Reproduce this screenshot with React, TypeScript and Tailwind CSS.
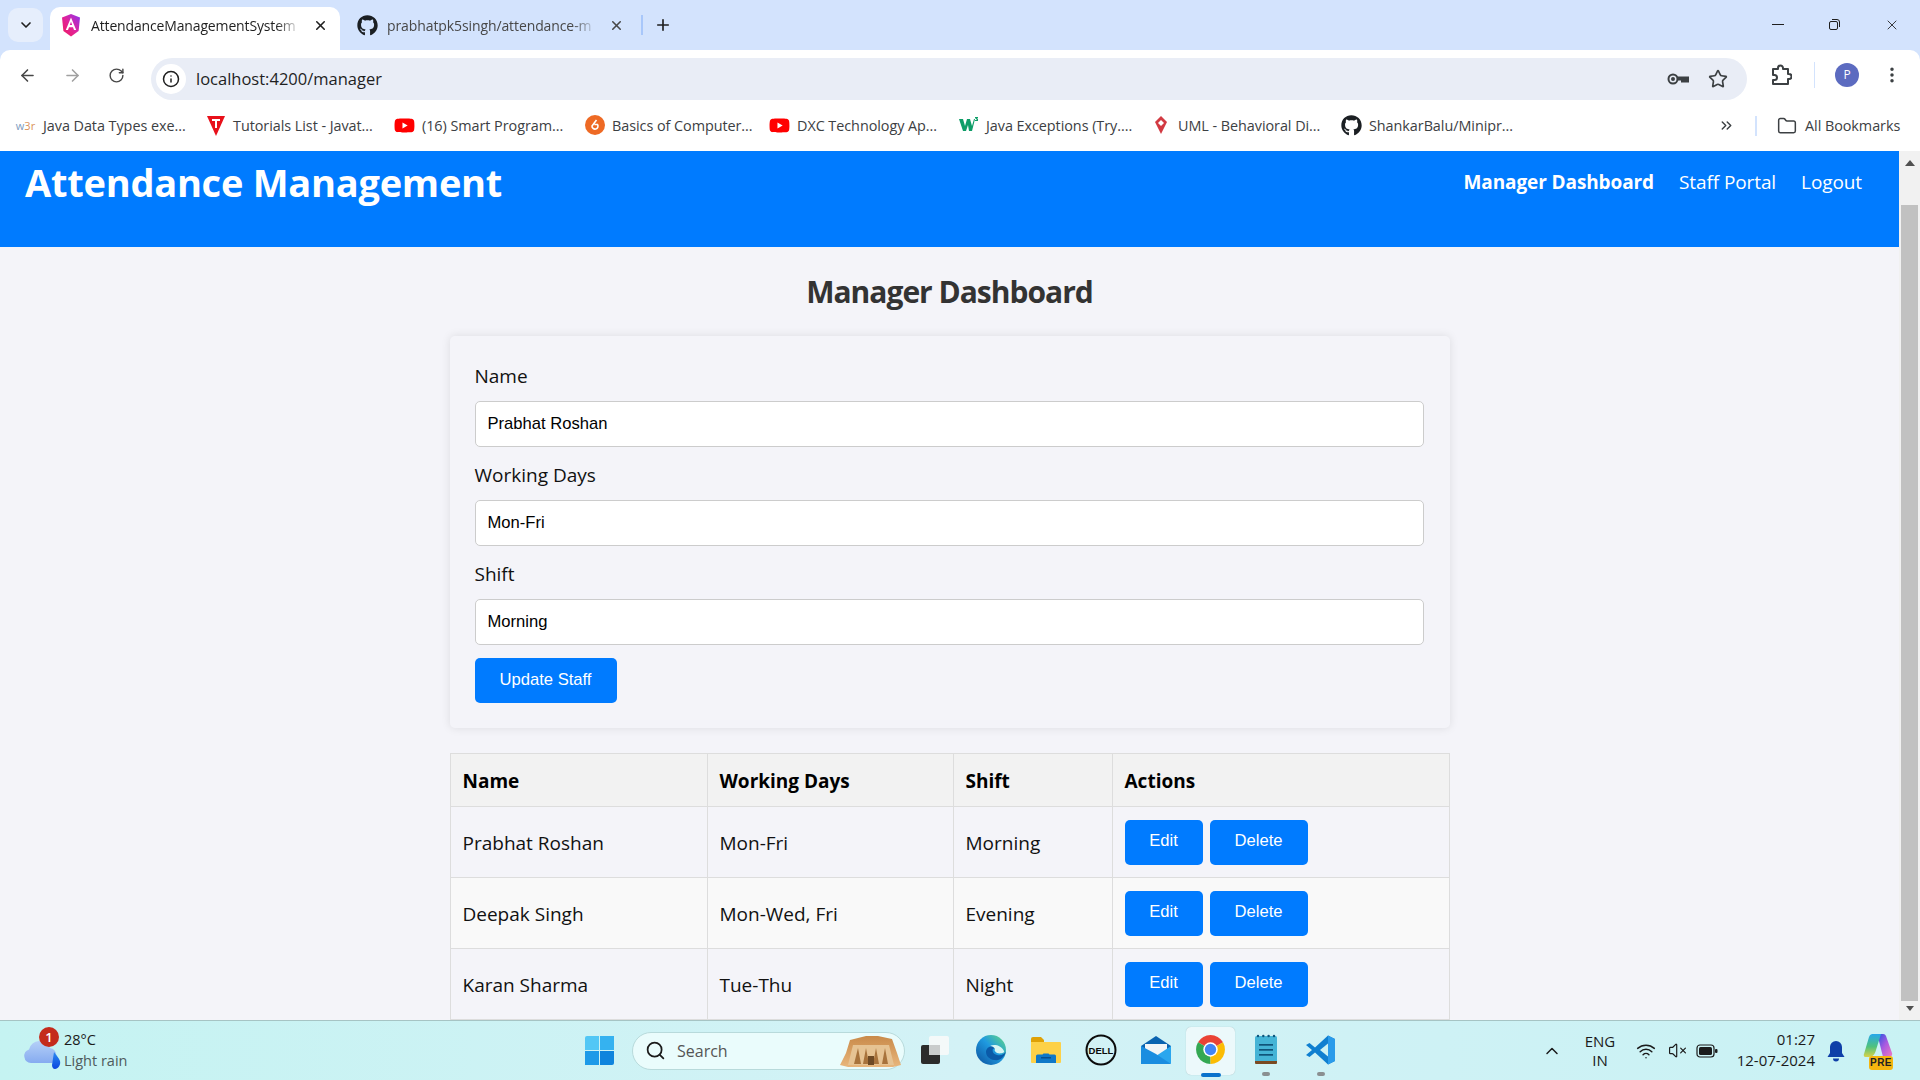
import { ReactNode } from "react"
import {
    ArrowLeft,
    ArrowRight,
    ChevronDown,
    ChevronsRight,
    ChevronUp,
    EllipsisVertical,
    Folder,
    Info,
    Plus,
    RotateCw,
    Search,
    Star,
    VolumeX,
    Wifi,
    X,
} from "lucide-react"
import { FaGithub, FaYoutube } from "react-icons/fa"

/* ---------------- Data ---------------- */
const staff = [
    { name: "Prabhat Roshan", days: "Mon-Fri", shift: "Morning" },
    { name: "Deepak Singh", days: "Mon-Wed, Fri", shift: "Evening" },
    { name: "Karan Sharma", days: "Tue-Thu", shift: "Night" },
]

const fields = [
    { label: "Name", value: "Prabhat Roshan" },
    { label: "Working Days", value: "Mon-Fri" },
    { label: "Shift", value: "Morning" },
]

const YouTube = () => <FaYoutube size={21} className="text-[#f00]" />

const bookmarks: { width: string; text: string; icon: ReactNode }[] = [
    {
        width: "w-[190px]",
        text: "Java Data Types exe...",
        icon: <span className="text-[11px] leading-none text-[#7d9cc0]">w<span className="text-[#d9925a]">3r</span></span>,
    },
    {
        width: "w-[189px]",
        text: "Tutorials List - Javat...",
        icon: (
            <svg width="20" height="22" viewBox="0 0 20 22">
                <path d="M1 1h18L10 21z" fill="#e8101a" />
                <path d="M6 4h8v2h-3v7H9V6H6z" fill="#fff" />
            </svg>
        ),
    },
    { width: "w-[190px]", text: "(16) Smart Program...", icon: <YouTube /> },
    {
        width: "w-[185px]",
        text: "Basics of Computer...",
        icon: (
            <svg width="20" height="20" viewBox="0 0 20 20">
                <circle cx="10" cy="10" r="10" fill="#ee6a24" />
                <path d="M11.5 5 7 11a3 3 0 1 0 5.5-1.5H9.5" fill="none" stroke="#fff" strokeWidth="1.6" />
            </svg>
        ),
    },
    { width: "w-[189px]", text: "DXC Technology Ap...", icon: <YouTube /> },
    {
        width: "w-[192px]",
        text: "Java Exceptions (Try....",
        icon: (
            <svg width="20" height="18" viewBox="0 0 20 18">
                <path d="M0 3h4l2 7 2-7h3l2 7 2-7h1l-3 12h-3L9 9l-2 6H4z" fill="#0f9d68" />
                <path d="M16 1h3v1l-1 1h1v2h-3V4h2l-2-2z" fill="#0f9d68" />
            </svg>
        ),
    },
    {
        width: "w-[191px]",
        text: "UML - Behavioral Di...",
        icon: (
            <svg width="18" height="20" viewBox="0 0 18 20">
                <path d="M9 1 15 7 12 13 9 19 6 13 3 7z" fill="#d23a42" />
                <path d="M9 5 12 8 9 11 6 8z" fill="#fff" />
            </svg>
        ),
    },
    {
        width: "w-[200px]",
        text: "ShankarBalu/Minipr...",
        icon: <FaGithub size={21} className="text-[#1b1f23]" />,
    },
]

/* ---------------- Drawn icons ---------------- */
const AngularLogo = () => (
    <svg width="20" height="23" viewBox="0 0 20 23">
        <defs>
            <linearGradient id="ng" x1="0" y1="1" x2="1" y2="0">
                <stop offset="0" stopColor="#f01a5c" />
                <stop offset="0.5" stopColor="#e0249c" />
                <stop offset="1" stopColor="#8a34f0" />
            </linearGradient>
        </defs>
        <path d="M10 0 1 3.5 2.4 17 10 22.500 17.600 17 19 3.500z" fill="url(#ng)" />
        <path d="M10 3.500 4.800 16h2.200l1-2.800h4l1 2.800h2.200zM8.800 11 10 7.800 11.200 11z" fill="#fff" fillRule="evenodd" />
    </svg>
)

const KeyIcon = () => (
    <svg width="24" height="24" viewBox="0 0 24 24" fill="none" stroke="#3c4043" strokeWidth="2">
        <circle cx="7" cy="12" r="4.5" />
        <circle cx="7" cy="12" r="1" fill="#3c4043" />
        <path d="M11.5 10.5H22v4h-2v-2h-2v2h-2v-2h-4.5" />
    </svg>
)

const RestoreIcon = () => (
    <svg width="14" height="14" viewBox="0 0 14 14" fill="none" stroke="#1f1f1f">
        <rect x="2.5" y="3.5" width="8" height="8" rx="1.5" />
        <path d="M5 1.5h5a2.5 2.5 0 0 1 2.5 2.5v5" />
    </svg>
)

const ExtensionIcon = () => (
    <svg width="22" height="22" viewBox="0 0 22 22" fill="none" stroke="#3c4043" strokeWidth="2" strokeLinejoin="round">
        <path d="M3 5h5V4a2.500 2.500 0 0 1 5 0v1h5v5h1a2.500 2.500 0 0 1 0 5h-1v5H3v-4h1.500a2.500 2.500 0 0 0 0-5H3z" />
    </svg>
)

const WeatherIcon = () => (
    <div className="relative w-[46px] h-[46px]">
        <svg width="46" height="46" viewBox="0 0 46 46" className="absolute left-0 top-0">
            <defs>
                <linearGradient id="cloud" x1="0" y1="0" x2="0" y2="1">
                    <stop offset="0" stopColor="#b5d0f7" />
                    <stop offset="1" stopColor="#86abf0" />
                </linearGradient>
                <linearGradient id="drop" x1="0" y1="0" x2="0" y2="1">
                    <stop offset="0" stopColor="#2b8cf0" />
                    <stop offset="1" stopColor="#0b45e0" />
                </linearGradient>
            </defs>
            <path d="M11 35a7 7 0 0 1-2-13.6A11 11 0 0 1 30 20a8 8 0 0 1 2 15z" fill="url(#cloud)" />
            <path d="M34 24c2 3 5 6 6 9 1 4-2 8-5 8-2 0-3-2-3-4z" fill="url(#drop)" />
        </svg>
        <span className="absolute left-[19px] top-[-1px] w-[20px] h-[20px] rounded-full bg-[#c42b1c] text-white text-[13px] leading-[20px] text-center font-semibold">
            1
        </span>
    </div>
)

const WindowsLogo = () => (
    <div className="grid grid-cols-2 gap-[1px] w-[29px] h-[29px]">
        <div className="bg-[#52c7f5] rounded-tl-[2px]" />
        <div className="bg-[#35b2f0]" />
        <div className="bg-[#1d9ae8]" />
        <div className="bg-[#0f84dd] rounded-br-[2px]" />
    </div>
)

const TempleIcon = () => (
    <svg width="62" height="32" viewBox="0 0 62 32">
        <defs>
            <linearGradient id="sand" x1="0" y1="0" x2="0" y2="1">
                <stop offset="0" stopColor="#c98a4a" />
                <stop offset="1" stopColor="#e8b67c" />
            </linearGradient>
        </defs>
        <path d="M10 5 26 1h12l14 3 5 14 4 12-8 2H8l-8-2 6-12z" fill="url(#sand)" />
        <path d="M13 10h36l5 20H8z" fill="#e6c393" />
        <path d="M14 29 18 13l3 16zM23 29l3-16 3 16zM33 29l3-16 3 16zM42 29l3-16 3 16z" fill="#a8733c" />
        <rect x="28" y="21" width="6" height="9" fill="#6e4a25" />
    </svg>
)

const TaskView = () => (
    <svg width="30" height="30" viewBox="0 0 30 30">
        <rect x="1" y="10" width="19" height="19" rx="2" fill="#2b2b2b" />
        <rect x="9" y="1" width="20" height="19" rx="2" fill="#f7f9f9" fillOpacity="0.9" />
        <rect x="9" y="10" width="11" height="10" fill="#c9cccc" />
    </svg>
)

const EdgeIcon = () => (
    <svg width="32" height="32" viewBox="0 0 32 32">
        <defs>
            <linearGradient id="edge" x1="0" y1="1" x2="1" y2="0">
                <stop offset="0" stopColor="#0c4f9c" />
                <stop offset="0.55" stopColor="#1f9ae0" />
                <stop offset="1" stopColor="#66dc7e" />
            </linearGradient>
        </defs>
        <circle cx="16" cy="16" r="15" fill="url(#edge)" />
        <path d="M31 17c-1 3-5 5-9 4-4-1-5-4-4-6 1-1 3-1 4 0-3-5-11-3-11 3 0 6 7 9 12 8 4-1 7-4 8-9z" fill="#0b5aa8" />
        <path d="M15 12c4-2 11-1 14 5 1 2-4 3-7 2-2-1-3-3-2-4-1-2-3-3-5-3z" fill="#d8f5f3" />
    </svg>
)

const FilesIcon = () => (
    <svg width="32" height="28" viewBox="0 0 32 28">
        <path d="M1 3a2 2 0 0 1 2-2h8l3 3v5H1z" fill="#dfa106" />
        <path d="M1 6h29a1 1 0 0 1 1 1v19a1 1 0 0 1-1 1H2a1 1 0 0 1-1-1z" fill="#fdd148" />
        <path d="M6 20a1.500 1.500 0 0 1 1.500-1.500h5l1-1h5l1 1h5A1.500 1.500 0 0 1 26 20v7H6z" fill="#0f78c8" />
        <rect x="11" y="21" width="10" height="1.500" fill="#0a4f8c" />
    </svg>
)

const DellIcon = () => (
    <svg width="32" height="32" viewBox="0 0 32 32">
        <circle cx="16" cy="16" r="14.500" fill="none" stroke="#0b0b0b" strokeWidth="2" />
        <text x="16" y="19.500" textAnchor="middle" fontSize="9.500" fontWeight="700" fontFamily="Liberation Sans, sans-serif" fill="#0b0b0b">
            DELL
        </text>
    </svg>
)

const MailIcon = () => (
    <svg width="32" height="30" viewBox="0 0 32 30">
        <path d="M1 11 16 1l15 10v3H1z" fill="#0a63b0" />
        <path d="M5 9h22v9l-11 6-11-6z" fill="#f2f5f7" />
        <path d="M1 11v17a1 1 0 0 0 1 1h28a1 1 0 0 0 1-1V11L16 21z" fill="#2aa6ee" />
        <path d="M1 29h30L16 19 1 11z" fill="#1a8de0" />
    </svg>
)

const ChromeIcon = () => (
    <svg width="31" height="31" viewBox="0 0 30 30">
        <path d="M15 15 27.100 8A14 14 0 0 0 2.900 8z" fill="#ea4335" />
        <path d="M15 15 2.900 8A14 14 0 0 0 15 29z" fill="#34a853" />
        <path d="M15 15 15 29A14 14 0 0 0 27.100 8z" fill="#fbbc04" />
        <circle cx="15" cy="15" r="7" fill="#fff" />
        <circle cx="15" cy="15" r="5.500" fill="#4285f4" />
    </svg>
)

const NotepadIcon = () => (
    <svg width="24" height="32" viewBox="0 0 24 32">
        <rect x="1" y="2" width="22" height="26" rx="1.500" fill="#45b4d6" />
        <path d="M1 27h22v2a1 1 0 0 1-1 1H2a1 1 0 0 1-1-1z" fill="#7a4a22" />
        <rect x="5" y="10" width="14" height="1.700" fill="#10547a" />
        <rect x="5" y="15" width="14" height="1.700" fill="#10547a" />
        <rect x="5" y="20" width="14" height="1.700" fill="#10547a" />
        <g fill="#10547a">
            <circle cx="4" cy="2" r="1.200" />
            <circle cx="9.300" cy="2" r="1.200" />
            <circle cx="14.600" cy="2" r="1.200" />
            <circle cx="20" cy="2" r="1.200" />
        </g>
    </svg>
)

const VsCodeIcon = () => (
    <svg width="32" height="32" viewBox="0 0 32 32">
        <path d="M23 1.500 30 5v22l-7 3.500L10 18.500 4.500 23 1 21l6-5-6-5 3.500-2L10 13.500z" fill="#0f7fd0" />
        <path d="M23 1.500 30 5v22l-7 3.500z" fill="#2a9bea" />
        <path d="M23 9.500 15 16l8 6.500z" fill="#cdf2f4" />
    </svg>
)

const BatteryIcon = () => (
    <svg width="22" height="16" viewBox="0 0 22 16" fill="none">
        <rect x="1" y="2" width="17" height="12" rx="3" stroke="#1b1b1b" strokeWidth="1.200" />
        <rect x="3" y="4" width="13" height="8" rx="1.500" fill="#1b1b1b" />
        <rect x="19" y="6" width="2.500" height="4" rx="1" fill="#1b1b1b" />
    </svg>
)

const BellIcon = () => (
    <svg width="18" height="22" viewBox="0 0 18 22">
        <path d="M9 1a6 6 0 0 0-6 6v6l-2.500 4h17L15 13V7a6 6 0 0 0-6-6z" fill="#0f3fa8" />
        <path d="M6 18.500h6a3 3 0 0 1-6 0z" fill="#0f3fa8" />
    </svg>
)

const CopilotIcon = () => (
    <div className="relative w-[32px] h-[36px]">
        <svg width="30" height="28" viewBox="0 0 30 28" className="absolute left-[-1px] top-0">
            <defs>
                <linearGradient id="cpa" x1="0" y1="0" x2="0" y2="1">
                    <stop offset="0" stopColor="#26a8ec" />
                    <stop offset="0.55" stopColor="#4fc27c" />
                    <stop offset="1" stopColor="#d9d24a" />
                </linearGradient>
                <linearGradient id="cpb" x1="0" y1="0" x2="1" y2="1">
                    <stop offset="0" stopColor="#1f55e0" />
                    <stop offset="0.5" stopColor="#a95ae0" />
                    <stop offset="1" stopColor="#f07ac0" />
                </linearGradient>
            </defs>
            <path d="M14 1h6a3 3 0 0 1 3 2l6 17a3 3 0 0 1-3 4h-6L16 8z" fill="url(#cpb)" />
            <path d="M9 1h9L13 17c-1 4-3 7-7 7H3a2 2 0 0 1-2-3l5-17a4 4 0 0 1 3-3z" fill="url(#cpa)" />
        </svg>
        <span className="absolute left-[5px] bottom-[-1px] h-[14px] w-[24px] rounded-[3px] bg-[#f5b50f] text-[10px] leading-[14px] text-center font-bold text-[#222] tracking-[0.5px] font-['Liberation_Sans',sans-serif]">
            PRE
        </span>
    </div>
)

/* ---------------- Browser chrome ---------------- */
function BrowserChrome() {
    return (
        <div className="bg-[#d3e3fd] font-['Open_Sans',sans-serif] shrink-0">
            {/* Tabs */}
            <div className="h-[50px] flex">
                <div className="ml-[8px] mt-[8px] w-[35px] h-[34px] rounded-[10px] bg-[#e6eefc] flex items-center justify-center">
                    <ChevronDown size={16} strokeWidth={2.5} className="text-[#1f1f1f]" />
                </div>
                <div className="ml-[7px] mt-[7px] w-[290px] h-[43px] bg-white rounded-t-[10px] flex items-center pl-[11px] pb-[7px]">
                    <AngularLogo />
                    <span className="ml-[10px] w-[210px] whitespace-nowrap text-[14px] text-[#1f1f1f] tracking-[-0.15px] [mask-image:linear-gradient(to_right,black_88%,transparent)]">
                        AttendanceManagementSystem
                    </span>
                    <X size={15} strokeWidth={2.5} className="ml-[12px] text-[#1f1f1f]" />
                </div>
                <div className="w-[290px] h-[43px] mt-[7px] flex items-center pl-[17px] pb-[7px]">
                    <FaGithub size={21} className="text-[#1b1f23]" />
                    <span className="ml-[9px] w-[210px] whitespace-nowrap text-[14px] text-[#474747] tracking-[-0.1px] [mask-image:linear-gradient(to_right,black_88%,transparent)]">
                        prabhatpk5singh/attendance-m
                    </span>
                    <X size={15} strokeWidth={2.5} className="ml-[12px] text-[#474747]" />
                </div>
                <div className="ml-[11px] mt-[15px] w-[2px] h-[20px] bg-[#a8c7fa]" />
                <Plus size={18} strokeWidth={2.2} className="ml-[11px] mt-[16px] text-[#1f1f1f]" />
                <div className="ml-auto flex h-[49px] items-center">
                    <div className="w-[56px] flex justify-center">
                        <div className="w-[12px] h-[1px] bg-[#1f1f1f]" />
                    </div>
                    <div className="w-[56px] flex justify-center">
                        <RestoreIcon />
                    </div>
                    <div className="w-[58px] pl-[1px] flex justify-center">
                        <X size={16} strokeWidth={1.3} className="text-[#1f1f1f]" />
                    </div>
                </div>
            </div>

            {/* Address bar */}
            <div className="h-[50px] bg-white rounded-t-[10px] flex items-center text-[#474747]">
                <div className="w-[151px] pl-[18px] flex items-center gap-[26px]">
                    <ArrowLeft size={19} strokeWidth={2} className="text-[#474747] shrink-0" />
                    <ArrowRight size={19} strokeWidth={2} className="text-[#a0a0a0] shrink-0" />
                    <RotateCw size={17} strokeWidth={2} className="text-[#474747] shrink-0" />
                </div>
                <div className="mt-[8px] w-[1596px] h-[42px] rounded-full bg-[#e9edf6] flex items-center pl-[5px] pr-[19px]">
                    <div className="w-[30px] h-[30px] rounded-full bg-white flex items-center justify-center">
                        <Info size={18} strokeWidth={2} className="text-[#1f1f1f]" />
                    </div>
                    <span className="ml-[10px] pt-[1px] text-[16.5px] text-[#1f1f1f]">localhost:4200/manager</span>
                    <div className="ml-auto flex items-center gap-[18px]">
                        <KeyIcon />
                        <Star size={20} strokeWidth={2} className="text-[#3c4043]" />
                    </div>
                </div>
                <div className="ml-[23px] flex">
                    <ExtensionIcon />
                </div>
                <div className="ml-[22px] w-[1px] h-[26px] bg-[#d3e3fd]" />
                <div className="ml-[20px] w-[24px] h-[24px] rounded-full bg-[#5c6bc0] text-white text-[12px] leading-[24px] text-center">
                    P
                </div>
                <EllipsisVertical size={20} strokeWidth={2.2} className="ml-[23px] text-[#3c4043]" />
            </div>

            {/* Bookmarks */}
            <div className="h-[51px] bg-white flex items-center pl-[15px] text-[14.4px] text-[#3c4043]">
                {bookmarks.map(b => (
                    <div key={b.text} className={`${b.width} flex items-center shrink-0`}>
                        <div className="w-[21px] flex justify-center shrink-0">{b.icon}</div>
                        <span className="ml-[7px] whitespace-nowrap tracking-[-0.05px]">{b.text}</span>
                    </div>
                ))}
                <ChevronsRight size={17} strokeWidth={2} className="ml-[177px] text-[#3c4043] shrink-0" />
                <div className="ml-[20px] w-[2px] h-[20px] bg-[#d3e3fd] shrink-0" />
                <Folder size={20} strokeWidth={1.8} className="ml-[20px] text-[#3c4043] shrink-0" />
                <span className="ml-[8px] whitespace-nowrap tracking-[-0.05px]">All Bookmarks</span>
            </div>
        </div>
    )
}

/* ---------------- App page ---------------- */
function Btn({ children, className }: { children: ReactNode; className?: string }) {
    return (
        <button className={`h-[45px] pb-[1px] bg-[#007bff] text-white text-[16.6px] rounded-[5px] font-['Liberation_Sans',sans-serif] ${className ?? ""}`}>
            {children}
        </button>
    )
}

function ManagerPage() {
    return (
        <div className="flex-1 min-w-0 bg-[#f4f4f9] font-['Open_Sans',sans-serif] text-[#111]">
            <header className="h-[96px] bg-[#007bff] text-white flex items-start justify-between pl-[25px] pr-[37px]">
                <h1 className="text-[38px] leading-[62px] font-bold tracking-[-0.25px]">Attendance Management</h1>
                <nav className="flex gap-[25px] text-[19px] leading-[62px] tracking-[-0.1px]">
                    <a className="font-bold">Manager Dashboard</a>
                    <a>Staff Portal</a>
                    <a>Logout</a>
                </nav>
            </header>

            <h2 className="h-[89px] flex items-center justify-center text-[30px] font-bold text-[#333] tracking-[-1px]">
                Manager Dashboard
            </h2>

            <div className="w-[1000px] mx-auto">
                <form className="p-[25px] rounded-[5px] shadow-[0_0_10px_rgba(0,0,0,0.1)]">
                    {fields.map(f => (
                        <div key={f.label} className="mb-[13px]">
                            <label className="block h-[30px] mb-[10px] text-[19px] leading-[30px]">{f.label}</label>
                            <input
                                readOnly
                                value={f.value}
                                className="block w-[949px] h-[46px] px-[12px] bg-white border border-[#ccc] rounded-[5px] text-[16.6px] text-black font-['Liberation_Sans',sans-serif]"
                            />
                        </div>
                    ))}
                    <Btn className="w-[142px] block">Update Staff</Btn>
                </form>

                <table className="mt-[25px] w-[1000px] table-fixed border-collapse text-[19px]">
                    <colgroup>
                        <col className="w-[257px]" />
                        <col className="w-[246px]" />
                        <col className="w-[159px]" />
                        <col />
                    </colgroup>
                    <thead>
                        <tr className="h-[53px] bg-[#f2f2f2]">
                            {["Name", "Working Days", "Shift", "Actions"].map(h => (
                                <th key={h} className="border border-[#ddd] px-[12px] pt-[2px] text-left font-bold text-black">
                                    {h}
                                </th>
                            ))}
                        </tr>
                    </thead>
                    <tbody>
                        {staff.map((s, i) => (
                            <tr key={s.name} className={`h-[71px] ${i === 1 ? "bg-[#f9f9f9]" : ""}`}>
                                <td className="border border-[#ddd] px-[12px] pt-[2px]">{s.name}</td>
                                <td className="border border-[#ddd] px-[12px] pt-[2px]">{s.days}</td>
                                <td className="border border-[#ddd] px-[12px] pt-[2px]">{s.shift}</td>
                                <td className="border border-[#ddd] px-[12px]">
                                    <div className="flex gap-[7px]">
                                        <Btn className="w-[78px]">Edit</Btn>
                                        <Btn className="w-[98px]">Delete</Btn>
                                    </div>
                                </td>
                            </tr>
                        ))}
                    </tbody>
                </table>
            </div>
        </div>
    )
}

function Scrollbar() {
    return (
        <div className="w-[21px] shrink-0 bg-[#f1f1f1] flex flex-col items-center">
            <div className="mt-[9px] w-0 h-0 border-x-[5px] border-x-transparent border-b-[6px] border-b-[#505050]" />
            <div className="mt-[39px] w-[17px] h-[796px] bg-[#c1c1c1]" />
            <div className="mt-[5px] w-0 h-0 border-x-[4px] border-x-transparent border-t-[5px] border-t-[#505050]" />
        </div>
    )
}

/* ---------------- Taskbar ---------------- */
function TaskSlot({ children, active, dot }: { children: ReactNode; active?: boolean; dot?: boolean }) {
    return (
        <div className="relative w-[55px] h-[60px] flex items-center justify-center shrink-0">
            {active && <div className="absolute left-[3px] top-[6px] w-[49px] h-[48px] rounded-[5px] bg-[#ecf9fb] shadow-[0_0_1px_rgba(0,0,0,0.25)]" />}
            <div className="relative flex pb-[2px]">{children}</div>
            {active && <div className="absolute left-[18px] bottom-[4px] w-[20px] h-[4px] rounded-full bg-[#0a72cc]" />}
            {dot && <div className="absolute left-[24px] bottom-[5px] w-[8px] h-[4px] rounded-full bg-[#8a8f90]" />}
        </div>
    )
}

function Taskbar() {
    return (
        <div className="h-[60px] shrink-0 flex items-center border-t border-[#a6c4c4] bg-gradient-to-r from-[#c5f3f2] via-[#d3f2f6] to-[#c9f2f4] font-['Open_Sans',sans-serif] text-[#1b1b1b]">
            <div className="w-[573px] flex items-center shrink-0 pl-[20px]">
                <WeatherIcon />
                <div className="-ml-[2px] -mt-[2px] text-[14.5px] leading-[21px]">
                    <div>28°C</div>
                    <div className="text-[#4f5b5c]">Light rain</div>
                </div>
            </div>
            <div className="w-[52px] flex justify-center shrink-0">
                <WindowsLogo />
            </div>
            <div className="ml-[7px] w-[273px] h-[38px] rounded-full bg-[#eafcfc] border border-[#b8dadb] flex items-center pl-[12px] shrink-0">
                <Search size={21} strokeWidth={2} className="text-[#1b1b1b]" />
                <span className="ml-[11px] text-[16px] text-[#555]">Search</span>
                <div className="ml-auto mr-[2px] flex">
                    <TempleIcon />
                </div>
            </div>
            <TaskSlot>
                <div className="pl-[5px] flex">
                    <TaskView />
                </div>
            </TaskSlot>
            <div className="w-[3px] shrink-0" />
            <TaskSlot><EdgeIcon /></TaskSlot>
            <TaskSlot><FilesIcon /></TaskSlot>
            <TaskSlot><DellIcon /></TaskSlot>
            <TaskSlot><MailIcon /></TaskSlot>
            <TaskSlot active><ChromeIcon /></TaskSlot>
            <TaskSlot dot><NotepadIcon /></TaskSlot>
            <TaskSlot dot><VsCodeIcon /></TaskSlot>

            <div className="ml-auto flex items-center pr-[20px]">
                <div className="w-[40px] flex justify-center">
                    <ChevronUp size={20} strokeWidth={1.8} />
                </div>
                <div className="w-[56px] mr-[4px] text-center text-[15px] leading-[19px]">
                    <div>ENG</div>
                    <div>IN</div>
                </div>
                <div className="w-[28px] flex justify-center">
                    <Wifi size={20} strokeWidth={1.8} />
                </div>
                <div className="w-[34px] flex justify-center">
                    <VolumeX size={19} strokeWidth={1.5} />
                </div>
                <div className="w-[26px] flex justify-center">
                    <BatteryIcon />
                </div>
                <div className="w-[95px] -mt-[2px] text-right text-[15px] leading-[21px]">
                    <div>01:27</div>
                    <div>12-07-2024</div>
                </div>
                <div className="ml-[9px] w-[24px] flex justify-center">
                    <BellIcon />
                </div>
                <div className="ml-[12px] w-[40px] flex justify-center">
                    <CopilotIcon />
                </div>
            </div>
        </div>
    )
}

export default function App() {
    return (
        <div className="w-[1920px] h-[1080px] flex flex-col overflow-hidden">
            <BrowserChrome />
            <div className="h-[869px] flex overflow-hidden">
                <ManagerPage />
                <Scrollbar />
            </div>
            <Taskbar />
        </div>
    )
}
